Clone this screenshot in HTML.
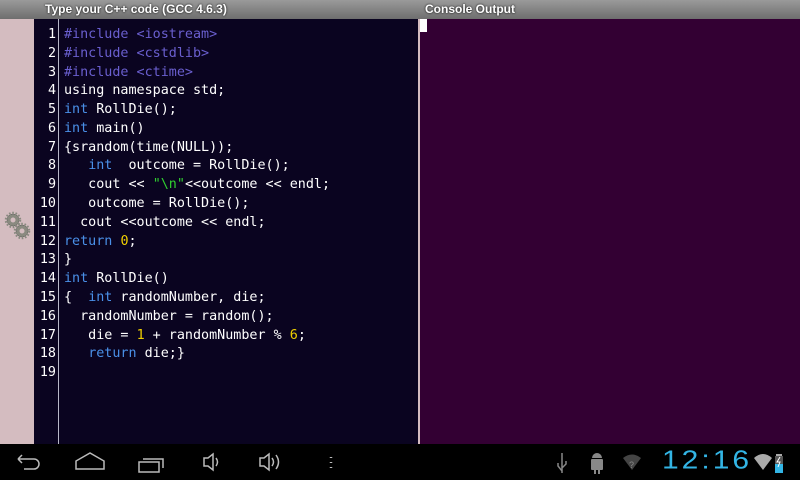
<!DOCTYPE html>
<html><head><meta charset="utf-8"><style>
*{margin:0;padding:0;box-sizing:border-box}
body{width:800px;height:480px;overflow:hidden;background:#000;font-family:"Liberation Sans",sans-serif;position:relative}
.title{position:absolute;top:0;height:19px;background:linear-gradient(#9a9a9a,#6e6e6e);color:#fff;font-weight:bold;font-size:12px;line-height:19px;text-shadow:0 0 2px #000}
.strip{position:absolute;left:0;top:19px;width:34px;height:425px;background:#d4bcc0}
.ed{position:absolute;left:34px;top:19px;width:384px;height:425px;background:#0a0420}
.gut{position:absolute;left:58px;top:19px;width:1px;height:425px;background:#b8b8c8}
.sep{position:absolute;left:418px;top:19px;width:2px;height:425px;background:#d4bcc0}
.con{position:absolute;left:420px;top:19px;width:380px;height:425px;background:#330033}
.cur{position:absolute;left:420px;top:19px;width:7px;height:13px;background:#fff}
pre{position:absolute;top:26px;font-family:"DejaVu Sans Mono",monospace;font-size:13.4px;line-height:18.78px;color:#fff}
.nums{left:34px;width:22px;text-align:right}
.code{left:64px}
.p{color:#6a5fcf}.k{color:#4a90e8}.s{color:#30d030}.n{color:#f0d000}
.bar{position:absolute;left:0;top:444px;width:800px;height:36px;background:#000}
.clock{position:absolute;left:662px;top:443px;font-size:30px;line-height:36px;color:#33b5e5;font-weight:300;letter-spacing:3px;transform:scaleY(0.85);transform-origin:left center}
</style></head><body>
<div class="title" style="left:0;width:418px;padding-left:45px">Type your C++ code (GCC 4.6.3)</div>
<div class="title" style="left:418px;width:382px;padding-left:7px">Console Output</div>
<div class="strip"></div>
<svg style="position:absolute;left:2px;top:210px" width="30" height="32" viewBox="0 0 30 32">
<g fill="#8a8a80" stroke="#555" stroke-width="0.5">
<circle cx="11" cy="10" r="6"/><circle cx="20" cy="21" r="6"/>
<g stroke="#8a8a80" stroke-width="2.5" stroke-dasharray="1.6 1.6"><circle cx="11" cy="10" r="7" fill="none"/><circle cx="20" cy="21" r="7" fill="none"/></g>
</g>
<circle cx="11" cy="10" r="2.5" fill="#d4bcc0"/><circle cx="20" cy="21" r="2.5" fill="#d4bcc0"/>
</svg>
<div class="ed"></div>
<div class="gut"></div>
<div class="sep"></div>
<div class="con"></div>
<div class="cur"></div>
<pre class="nums">1
2
3
4
5
6
7
8
9
10
11
12
13
14
15
16
17
18
19</pre>
<pre class="code"><span class="p">#include &lt;iostream&gt;</span>
<span class="p">#include &lt;cstdlib&gt;</span>
<span class="p">#include &lt;ctime&gt;</span>
using namespace std;
<span class="k">int</span> RollDie();
<span class="k">int</span> main()
{srandom(time(NULL));
   <span class="k">int</span>  outcome = RollDie();
   cout &lt;&lt; <span class="s">"\n"</span>&lt;&lt;outcome &lt;&lt; endl;
   outcome = RollDie();
  cout &lt;&lt;outcome &lt;&lt; endl;
<span class="k">return</span> <span class="n">0</span>;
}
<span class="k">int</span> RollDie()
{  <span class="k">int</span> randomNumber, die;
  randomNumber = random();
   die = <span class="n">1</span> + randomNumber % <span class="n">6</span>;
   <span class="k">return</span> die;}
</pre>
<div class="bar"></div>
<svg style="position:absolute;left:0;top:444px" width="560" height="36" viewBox="0 0 560 36" fill="none" stroke="#bbb" stroke-width="1.5">
<path d="M18 15h16a5 5 0 0 1 0 10h-10M18 15l4-4M18 15l4 4"/>
<path d="M76 25v-8l14-8 14 8v8z"/>
<rect x="139" y="18" width="20" height="10"/><path d="M143 15h20v9"/>
<path d="M204 14v8h4l5 4v-16l-5 4zM216 14q3 4 0 8"/>
<path d="M260 14v8h4l5 4v-16l-5 4zM272 14q3 4 0 8M276 11q5 7 0 14"/>
<path d="M331 13v1M331 18v1M331 23v1" stroke-width="2.5"/>
</svg>
<svg style="position:absolute;left:550px;top:444px" width="250" height="36" viewBox="0 0 250 36">
<path d="M12 9v20M12 27l-4-5v-3M12 24l4-4v-3" stroke="#888" stroke-width="1.5" fill="none"/>
<rect x="41" y="15" width="12" height="11" rx="1" fill="#888"/><path d="M42 14a5 5 0 0 1 10 0z" fill="#888"/><rect x="44" y="26" width="2" height="4" fill="#888"/><rect x="48" y="26" width="2" height="4" fill="#888"/>
<path d="M73 14q9-7 18 0l-9 12z" fill="#444"/><text x="79" y="24" font-size="9" fill="#888" font-family="Liberation Sans">?</text>
<path d="M204 14q9-8 18 0l-9 12z" fill="#aaa"/>
<rect x="226" y="10" width="6" height="2" fill="#aaa"/><rect x="225" y="12" width="8" height="17" fill="#555"/><rect x="225" y="20" width="8" height="9" fill="#33b5e5"/><path d="M230 13l-3 5h3l-2 5" stroke="#fff" fill="none"/>
</svg>
<div class="clock">12:16</div>
</body></html>
